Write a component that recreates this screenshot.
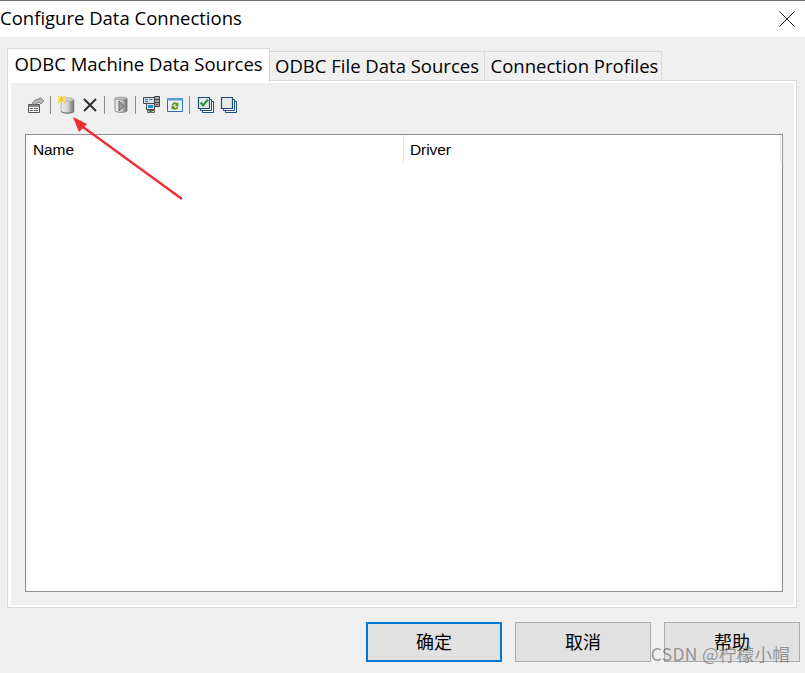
<script>
</script>

<div class="win">
  <header class="title">
    <span>Configure Data Connections</span>
    <svg class="close" width="16" height="16" viewBox="0 0 16 16"><path d="M.5.5l15 15M15.500.5l-15 15" stroke="#222" fill="none"/></svg>
  </header>
  <main class="body">
    <div class="tabs">
      <div class="tab active">ODBC Machine Data Sources</div>
      <div class="tab t2">ODBC File Data Sources</div>
      <div class="tab t3">Connection Profiles</div>
    </div>
    <section class="panel">
      <div class="toolbar">
        <span class="tb"><svg width="18" height="18" viewBox="0 0 18 18">
          <path d="M1.500 8.500h11v8h-11z" fill="#f4f4f4" stroke="#555"/><path d="M2 9h10v2H2z" fill="#8a8a8a"/><path d="M3 12.500h3M7 12.500h4M3 14.500h3M7 14.500h4" stroke="#666"/>
          <path d="M5 8c1-3 4-5 7-5l1-1.500L17 5l-3 3-1-1.500c-2 0-4 .5-5 2z" fill="#b5b5b5" stroke="#6a6a6a" stroke-width=".7"/>
        </svg></span>
        <i class="sep"></i>
        <span class="tb"><svg width="18" height="18" viewBox="0 0 18 18">
          <defs><linearGradient id="cy" x1="0" x2="1"><stop offset="0" stop-color="#ededed"/><stop offset=".5" stop-color="#d4d4d4"/><stop offset="1" stop-color="#6f6f6f"/></linearGradient></defs>
          <path d="M3 3.500h13v12c-2.500 2-10.500 2-13 0z" fill="url(#cy)" stroke="#8a8a8a" stroke-width=".6"/>
          <path d="M3 15c2.500 2 10.500 2 13 0v1c-2.500 2-10.500 2-13 0z" fill="#6c6c6c"/>
          <ellipse cx="9.500" cy="3.500" rx="6.500" ry="1.800" fill="#cfcfcf" stroke="#999" stroke-width=".5"/>
          <path d="M0 0h7v7H0z" fill="#fdf3b0"/><path d="M3.500 0v7M0 3.500h7M0 0l7 7M7 0L0 7" stroke="#f3c62e" stroke-width="1.100"/>
        </svg></span>
        <span class="tb"><svg width="18" height="18" viewBox="0 0 18 18"><path d="M3 3l12 12M15 3L3 15" stroke="#2a2a2a" stroke-width="1.800" fill="none"/></svg></span>
        <i class="sep"></i>
        <span class="tb"><svg width="18" height="18" viewBox="0 0 18 18">
          <path d="M3 2.500h12v12.500c-2 1.800-10 1.800-12 0z" fill="url(#cy)" stroke="#666" stroke-width=".7"/>
          <ellipse cx="9" cy="2.500" rx="6" ry="1.500" fill="#bdbdbd" stroke="#777" stroke-width=".5"/>
          <path d="M7 5l5 5-5 5z" fill="#9c9c9c" stroke="#5e5e5e" stroke-width=".8"/>
        </svg></span>
        <i class="sep"></i>
        <span class="tb"><svg width="18" height="18" viewBox="0 0 18 18">
          <path d="M.5 1.500h11v6H.5z" fill="#d8dde8" stroke="#444"/><path d="M2 3.500h3M6.500 3.500h3M2 5.500h3" stroke="#2f6fb5"/>
          <path d="M11.500.5h5v10h-5z" fill="#a5a5a5" stroke="#444"/><path d="M11.500 3.500h5M11.500 6.500h5" stroke="#444"/><path d="M13 8.500h2" stroke="#c22"/>
          <path d="M3.500 7.500h8v6h-8z" fill="#dfe6ee" stroke="#444"/><path d="M5 9h5v3H5z" fill="#1d8fd6"/>
          <path d="M4.500 14.500h7v2h-7z" fill="#c8c8c8" stroke="#444" stroke-width=".8"/><path d="M6 15.500h3" stroke="#2a9a3a"/>
        </svg></span>
        <span class="tb"><svg width="18" height="18" viewBox="0 0 18 18">
          <path d="M1.500 2.500h15v13h-15z" fill="#eef4fa" stroke="#2e6ea6"/><path d="M1 2h16v2.500H1z" fill="#5b9bd5"/>
          <path d="M5.500 9.500a3.500 3.500 0 0 1 6-2.200l1-1v3.700H9l1-1a1.800 1.800 0 0 0-2.800.5zM12.500 10.500a3.500 3.500 0 0 1-6 2.200l-1 1V10H9l-1 1a1.800 1.800 0 0 0 2.800-.5z" fill="#5c9a1f"/>
        </svg></span>
        <i class="sep"></i>
        <span class="tb"><svg width="18" height="18" viewBox="0 0 18 18">
          <path d="M5.500 5.500h11v11h-11z" fill="#fff" stroke="#1c4f85"/><path d="M3.500 3.500h11v11h-11z" fill="#fff" stroke="#1c4f85"/>
          <path d="M1.500 1.500h11v11h-11z" fill="#e9e9e4" stroke="#1c4f85" stroke-width="1.200"/>
          <path d="M3.500 6.500l2.500 3 5-6" stroke="#1e9a3a" stroke-width="2" fill="none"/>
        </svg></span>
        <span class="tb"><svg width="18" height="18" viewBox="0 0 18 18">
          <path d="M5.500 5.500h11v11h-11z" fill="#fff" stroke="#1c4f85"/><path d="M3.500 3.500h11v11h-11z" fill="#fff" stroke="#1c4f85"/>
          <path d="M1.500 1.500h11v11h-11z" fill="#e9e9e4" stroke="#1c4f85" stroke-width="1.200"/>
        </svg></span>
      </div>
      <div class="list">
        <div class="head">
          <div class="col c1">Name</div>
          <div class="col c2">Driver</div>
        </div>
      </div>
    </section>
    <footer class="btns">
      <button class="def">确定</button>
      <button>取消</button>
      <button>帮助</button>
    </footer>
  </main>
  <svg class="arrow" width="120" height="100" viewBox="0 0 120 100">
    <path d="M112 85L13 13" stroke="#ee2c34" stroke-width="2.300" fill="none"/>
    <path d="M3 3l14 7-8 8z" fill="#ee2c34"/>
  </svg>
  <div class="wm">CSDN @柠檬小帽</div>
</div>

<style>
  :global(body) { margin: 0; background: #f0f0f0; }
  .win { position: relative; width: 805px; height: 673px; overflow: hidden; background: #f0f0f0; font-family: "Noto Sans CJK SC", "Open Sans", sans-serif; color: #000; }
  .title { box-sizing: border-box; height: 37px; background: #fff; border-top: 1px solid #6e6e6e; padding-bottom: 3px; display: flex; align-items: center; justify-content: space-between; padding-right: 10px; font-family: "Open Sans", "Noto Sans", sans-serif; font-size: 18.500px; }
  .close { margin-top: 3px; }
  .body { padding: 12px 8px 0 7px; }
  .tabs { display: flex; align-items: flex-end; height: 31px; font-family: "Open Sans", "Noto Sans", sans-serif; font-size: 18.500px; position: relative; z-index: 1; }
  .tab { box-sizing: border-box; height: 29px; background: #f0f0f0; border: 1px solid #d9d9d9; border-left: 0; border-bottom: 0; padding-bottom: 2px; display: flex; align-items: center; justify-content: center; white-space: nowrap; }
  .tab.active { height: 34px; width: 263px; background: #fff; border: 1px solid #d9d9d9; border-bottom: 0; margin-bottom: -2px; padding-bottom: 5px; }
  .t2 { width: 215px; }
  .t3 { width: 177px; padding-left: 3px; }
  .panel { box-sizing: border-box; height: 528px; width: 790px; border: 1px solid #d9d9d9; box-shadow: inset 0 0 0 2px #fff, inset 3px 0 0 #fff; background: #efefef; padding: 0 14px 0 17px; }
  .toolbar { display: flex; align-items: center; height: 53px; padding-bottom: 5px; box-sizing: border-box; margin-left: -1px; }
  .tb { flex: none; width: 23px; display: flex; justify-content: center; }
  .sep { flex: none; width: 1px; height: 18px; background: #8c8c8c; margin: 0 4px 0 3px; }
  .list { box-sizing: border-box; height: 458px; width: 758px; border: 1px solid #8b8e96; background: #fff; }
  .head { display: flex; height: 28px; font-family: "Liberation Sans", Arial, sans-serif; font-size: 15.500px; }
  .col { display: flex; align-items: center; padding-left: 7px; padding-top: 1px; box-sizing: border-box; letter-spacing: -.1px; }
  .c1 { width: 378px; border-right: 1px solid #e5e5e5; }
  .c2 { width: 377px; border-right: 1px solid #e5e5e5; padding-left: 6px; }
  .btns { display: flex; justify-content: flex-end; gap: 13px; margin-top: 14px; margin-right: -3px; }
  button { box-sizing: border-box; width: 136px; height: 40px; background: #e1e1e1; border: 1px solid #adadad; font: 18px "Noto Sans CJK SC", sans-serif; color: #000; padding: 0 0 2px; }
  button.def { border: 2px solid #0078d7; }
  .arrow { position: absolute; left: 70px; top: 114px; }
  .wm { position: absolute; right: 15px; top: 641px; font: 17.500px "Noto Sans CJK SC", sans-serif; color: rgba(120,120,120,.75); letter-spacing: .3px; }
</style>
